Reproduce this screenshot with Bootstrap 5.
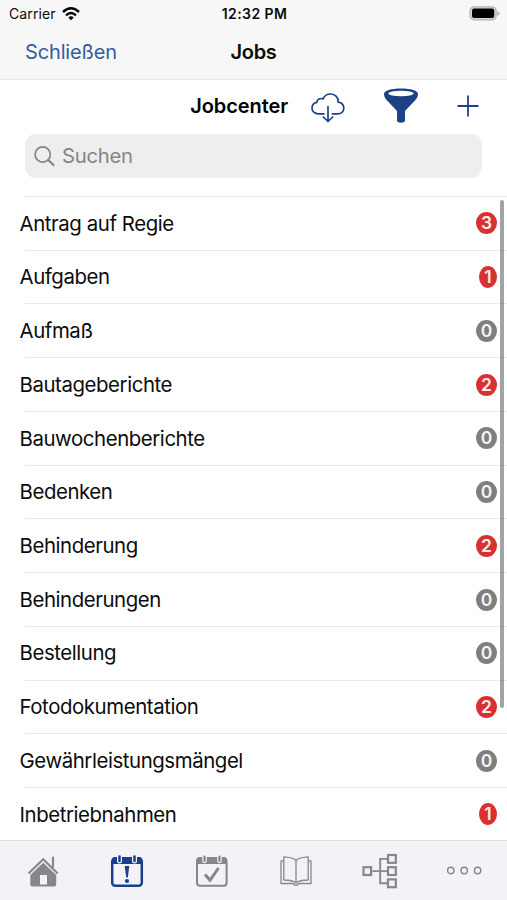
<!DOCTYPE html>
<html lang="de">
<head>
<meta charset="utf-8">
<meta name="viewport" content="width=device-width, initial-scale=1">
<title>Jobs</title>
<link href="https://cdn.jsdelivr.net/npm/bootstrap@5.3.0/dist/css/bootstrap.min.css" rel="stylesheet">
<style>
  body { font-family: Inter, "Liberation Sans", sans-serif; color: #0c0c0c; background: #fff; }
  svg { display: block; flex: none; }
  .screen { height: 900px; }
  .topbar { height: 80px; background: #f7f7f7; border-bottom: 1px solid #e9e9e9; }
  .status { height: 27px; padding: 0 7px 0 9px; font-size: 14px; line-height: 27px; }
  .status-carrier { letter-spacing: .1px; }
  .status-time { font-weight: 600; letter-spacing: .4px; }
  .titlebar { height: 52px; padding: 0 25px; font-size: 20px; line-height: 51px; }
  .third { flex: 1 1 0; }
  .close-link { color: #385a9e; letter-spacing: -.15px; }
  .title { font-weight: 600; letter-spacing: -.35px; }
  .tools { height: 54px; padding: 0 28px 2px 0; color: #1c4285; }
  .tools-title { font-size: 20px; font-weight: 600; letter-spacing: -.1px; color: #000; margin-right: 23px; }
  .filter-icon, .add-icon { margin-left: 38px; }
  .search { height: 44px; margin: 0 25px; padding-left: 9px; background: #eee; border-radius: 11px; color: #858585; font-size: 20.3px; letter-spacing: -.3px; }
  .search-hint { margin-left: 7px; padding-top: 1px; }
  .jobs { margin-top: 18px; height: 644px; font-size: 20.4px; letter-spacing: -.42px; }
  .job { height: 53.74px; padding: 2px 10px 0 20px; background: linear-gradient(#e9e9e9, #e9e9e9) 25px 0 / 100% 1px no-repeat; }
  .job-name { margin-left: -.5px; }
  .count { width: 21px; height: 22px; margin-bottom: 1px; border-radius: 50%; font-size: 17.5px; font-weight: 600; line-height: 22px; letter-spacing: 0; color: #fbecec; background: #d93031; }
  .count-one { width: 18px; }
  .count-zero { color: #f4f4f4; background: #7f7f7f; }
  .scroller { top: 4px; right: 3px; width: 4px; height: 508px; border-radius: 2px; background: rgba(70, 73, 73, .5); }
  .tabs { height: 60px; padding: 1px 0 0 1px; background: #f2f2f7; border-top: 1px solid #dcdce0; color: #87878b; }
  .tabs a { color: inherit; }
  .tabs .current { color: #1b408b; }
</style>
<script src="https://cdn.jsdelivr.net/npm/bootstrap@5.3.0/dist/js/bootstrap.bundle.min.js"></script>
</head>
<body>
<div class="screen d-flex flex-column overflow-hidden">
  <header class="topbar">
    <div class="status d-flex">
      <div class="third d-flex align-items-center"><span class="status-carrier">Carrier</span>
        <svg style="margin-left:6px" width="18" height="14" viewBox="0 0 18 14" fill="none" stroke="#050505" stroke-width="2.4"><path d="M1 5Q9-2.4 17 5M4 8.3q5-4.5 10 0"/><path d="M6.3 10.5Q9 8.2 11.7 10.5L9 13.3Z" fill="#050505" stroke="none"/></svg>
      </div>
      <div class="status-time">12:32 PM</div>
      <div class="third d-flex align-items-center justify-content-end">
        <svg width="31" height="15" viewBox="0 0 31 15"><rect x="1.1" y=".8" width="26" height="13" rx="4" fill="#d6d6d6" stroke="#b4b4b4" stroke-width="1.3"/><rect x="3" y="2.6" width="22.2" height="9.4" rx="2"/><path d="M28.4 5v5q2-1 2-2.5T28.4 5Z" fill="#aaa"/></svg>
      </div>
    </div>
    <div class="titlebar d-flex">
      <div class="third"><a href="#" class="close-link text-decoration-none">Schließen</a></div>
      <div class="title">Jobs</div>
      <div class="third"></div>
    </div>
  </header>

  <div class="tools d-flex align-items-center justify-content-end">
    <span class="tools-title">Jobcenter</span>
    <svg class="mt-1" width="34" height="30" viewBox="0 0 34 30" fill="none" stroke="currentColor" stroke-width="1.7" stroke-linecap="round" stroke-linejoin="round"><path d="M13 20.8H7.5C3.5 20.8 1 18.3 1 15c0-3.2 2.200-5.200 4.900-5.700C5.800 6.500 9.400 4.600 12 6 13.300 2.800 16.400 1 19.500 1c4.700 0 8.100 3.600 7.700 8.100 3 .5 5.600 2.700 5.600 5.900 0 3.300-2.400 5.800-6.100 5.800h-5.400M17 13.500v14.200M12.300 24l4.700 4.500 4.700-4.500"/></svg>
    <svg class="filter-icon" width="36" height="36" viewBox="0 0 36 36"><path d="M1 6C1 2.600 8 .5 18 .5S35 2.600 35 6c0 3-1.600 5-4 7.500l-9 9.500v9.500c0 3-8 3-8 0V23l-9-9.500C2.600 11 1 9 1 6Z" fill="currentColor"/><ellipse cx="18" cy="5.500" rx="12.700" ry="2.800" fill="#fff"/></svg>
    <svg class="add-icon" width="22" height="22" viewBox="0 0 22 22" fill="none" stroke="currentColor" stroke-width="1.800"><path d="M11 .5v21M.5 11h21"/></svg>
  </div>
  <div class="search d-flex align-items-center">
    <svg width="21" height="21" viewBox="0 0 21 21" fill="none" stroke="currentColor" stroke-width="1.700" stroke-linecap="round"><circle cx="8.700" cy="8.500" r="7.600"/><path d="M14.200 14l5.300 5" stroke-width="2.200"/></svg>
    <span class="search-hint">Suchen</span>
  </div>

  <main class="jobs position-relative overflow-hidden">
    <div class="job d-flex align-items-center justify-content-between"><span class="job-name">Antrag auf Regie</span><span class="count text-center">3</span></div>
    <div class="job d-flex align-items-center justify-content-between"><span class="job-name">Aufgaben</span><span class="count count-one text-center">1</span></div>
    <div class="job d-flex align-items-center justify-content-between"><span class="job-name">Aufmaß</span><span class="count count-zero text-center">0</span></div>
    <div class="job d-flex align-items-center justify-content-between"><span class="job-name">Bautageberichte</span><span class="count text-center">2</span></div>
    <div class="job d-flex align-items-center justify-content-between"><span class="job-name">Bauwochenberichte</span><span class="count count-zero text-center">0</span></div>
    <div class="job d-flex align-items-center justify-content-between"><span class="job-name">Bedenken</span><span class="count count-zero text-center">0</span></div>
    <div class="job d-flex align-items-center justify-content-between"><span class="job-name">Behinderung</span><span class="count text-center">2</span></div>
    <div class="job d-flex align-items-center justify-content-between"><span class="job-name">Behinderungen</span><span class="count count-zero text-center">0</span></div>
    <div class="job d-flex align-items-center justify-content-between"><span class="job-name">Bestellung</span><span class="count count-zero text-center">0</span></div>
    <div class="job d-flex align-items-center justify-content-between"><span class="job-name">Fotodokumentation</span><span class="count text-center">2</span></div>
    <div class="job d-flex align-items-center justify-content-between"><span class="job-name">Gewährleistungsmängel</span><span class="count count-zero text-center">0</span></div>
    <div class="job d-flex align-items-center justify-content-between"><span class="job-name">Inbetriebnahmen</span><span class="count count-one text-center">1</span></div>
    <div class="scroller position-absolute"></div>
  </main>

  <nav class="tabs d-flex">
    <a href="#" class="third d-flex align-items-center justify-content-center" aria-label="Start">
      <svg width="36" height="36" viewBox="0 0 36 36"><path d="M18.200 9.800 31.200 22v9.500q0 2-2 2H7.300q-2 0-2-2V22ZM15 22v9.500h7V22Z" fill="currentColor" fill-rule="evenodd"/><path d="M3.500 20.500 18.200 6.300l14.500 14.200M28 3.800v10.700" fill="none" stroke="currentColor" stroke-width="2.200"/></svg>
    </a>
    <a href="#" class="third current d-flex align-items-center justify-content-center" aria-label="Jobs">
      <svg width="36" height="36" viewBox="0 0 36 36"><rect x="3.200" y="5.500" width="29.600" height="27.200" rx="3" fill="none" stroke="currentColor" stroke-width="2.500"/><path d="M3 11V7q0-3 3-3h24q3 0 3 3v4Z" fill="currentColor"/><path d="M10.500 3.500v4.500M25.500 3.500v4.500" stroke="#f2f2f7" stroke-width="5" stroke-linecap="round"/><path d="M10.500 3.500v4.500M25.500 3.500v4.500" stroke="currentColor" stroke-width="2.500" stroke-linecap="round"/><path d="M15.700 13h4.600l-1.500 11.500h-1.600Z" fill="currentColor"/><circle cx="18" cy="28" r="2.100" fill="currentColor"/></svg>
    </a>
    <a href="#" class="third d-flex align-items-center justify-content-center" aria-label="Termine">
      <svg width="36" height="36" viewBox="0 0 36 36"><rect x="3" y="5.500" width="29.600" height="27.200" rx="3" fill="none" stroke="currentColor" stroke-width="2"/><path d="M2.500 11V7q0-3 3-3H30q3 0 3 3v4Z" fill="currentColor"/><path d="M10.500 3.500v4.500M25.500 3.500v4.500" stroke="#f2f2f7" stroke-width="4.600" stroke-linecap="round"/><path d="M10.500 3.500v4.500M25.500 3.500v4.500" stroke="currentColor" stroke-width="2.200" stroke-linecap="round"/><path d="M11 21.500l5 5.800 8.500-12.300" fill="none" stroke="currentColor" stroke-width="3"/></svg>
    </a>
    <a href="#" class="third d-flex align-items-center justify-content-center" aria-label="Katalog">
      <svg width="36" height="36" viewBox="0 0 36 36" fill="none" stroke="currentColor" stroke-width="1.300" stroke-linejoin="round"><path d="M18 7.500C15 4.500 11 4 5.800 3.800V27c5.200 0 9 .2 12.200 3 3.200-2.800 7-3 12.200-3V3.800C25 4 21 4.500 18 7.500ZM18 7.500V30"/><path d="M5.800 7.800H3V30.500h11.500q1.500 0 2 1.500h3q.5-1.500 2-1.500H33V7.800h-2.800"/></svg>
    </a>
    <a href="#" class="third d-flex align-items-center justify-content-center" aria-label="Struktur">
      <svg width="36" height="36" viewBox="0 0 36 36" fill="none" stroke="currentColor" stroke-width="2.200"><rect x="1.500" y="14.200" width="7.600" height="7.800"/><rect x="26" y="2" width="7.800" height="7.800"/><rect x="26" y="14.200" width="7.800" height="7.800"/><rect x="26" y="26.400" width="7.800" height="7.800"/><path d="M10.500 18.100H25M25 5.900h-6.800v24.400H25" stroke-width="1.900"/></svg>
    </a>
    <a href="#" class="third d-flex align-items-center justify-content-center" aria-label="Mehr">
      <svg width="36" height="36" viewBox="0 0 36 36" fill="none" stroke="currentColor" stroke-width="1.400"><circle cx="3.800" cy="17.500" r="3.200"/><circle cx="17.200" cy="17.500" r="3.200"/><circle cx="30.600" cy="17.500" r="3.200"/></svg>
    </a>
  </nav>
</div>
</body>
</html>
